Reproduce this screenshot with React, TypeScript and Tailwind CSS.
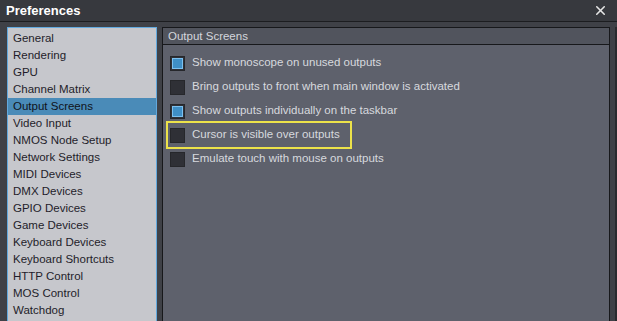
import { X } from "lucide-react";

const sections = [
  "General",
  "Rendering",
  "GPU",
  "Channel Matrix",
  "Output Screens",
  "Video Input",
  "NMOS Node Setup",
  "Network Settings",
  "MIDI Devices",
  "DMX Devices",
  "GPIO Devices",
  "Game Devices",
  "Keyboard Devices",
  "Keyboard Shortcuts",
  "HTTP Control",
  "MOS Control",
  "Watchdog",
];

const options = [
  { label: "Show monoscope on unused outputs", checked: true },
  { label: "Bring outputs to front when main window is activated", checked: false },
  { label: "Show outputs individually on the taskbar", checked: true },
  { label: "Cursor is visible over outputs", checked: false, highlight: true },
  { label: "Emulate touch with mouse on outputs", checked: false },
];

const Checkbox = ({ checked }: { checked: boolean }) => (
  <div className="w-[15px] h-[15px] bg-[#2f3036] border border-[#26272b] flex items-center justify-center shrink-0">
    {checked && <div className="w-[11px] h-[11px] bg-[#3f8fc6] border border-[#7cc0ee]" />}
  </div>
);

export default function App() {
  return (
    <div
      className="w-[617px] h-[321px] overflow-hidden bg-[#3f4147] flex flex-col"
      style={{ fontFamily: '"Liberation Sans", Arial, sans-serif' }}
    >
      <div className="h-[22px] bg-[#37393e] flex items-center justify-between pl-[6px] pr-[9px] border-b border-[#1c1d20] shrink-0">
        <span className="text-white font-bold text-[13px]">Preferences</span>
        <X className="w-[15px] h-[15px] text-[#e6e6e6]" strokeWidth={2.5} />
      </div>

      <div className="flex flex-1 pt-[5px] pl-[7px] gap-[5px] min-h-0">
        <div className="w-[150px] bg-[#c6c7cc] border-t border-x border-[#62a9de] pt-[2px] shrink-0">
          {sections.map((s) => (
            <div
              key={s}
              className={`h-[17px] leading-[17px] pl-[5px] text-[11.5px] ${
                s === "Output Screens" ? "bg-[#4a8bb8] text-[#10131a]" : "text-[#1f1d2a]"
              }`}
            >
              {s}
            </div>
          ))}
        </div>

        <div className="w-[450px] flex flex-col border-t border-x border-[#17181b] bg-[#5e616c]">
          <div className="h-[17px] bg-[#51545d] border-b border-[#17181b] text-[11.5px] leading-[16px] text-[#d4d6dc] pl-[5px] shrink-0">
            Output Screens
          </div>
          <div className="flex flex-col pt-[8px] pl-[7px] gap-[4px]">
            {options.map((o) => (
              <div
                key={o.label}
                className={`h-[20px] flex items-center gap-[7px] whitespace-nowrap text-[11.5px] text-[#d7d9de] ${
                  o.highlight ? "w-[178px] outline-2 outline-[#ece24a] outline-offset-2" : ""
                }`}
              >
                <Checkbox checked={o.checked} />
                <span>{o.label}</span>
              </div>
            ))}
          </div>
        </div>
        <div className="w-[2px] bg-[#2a2b2f]" />
      </div>
    </div>
  );
}
